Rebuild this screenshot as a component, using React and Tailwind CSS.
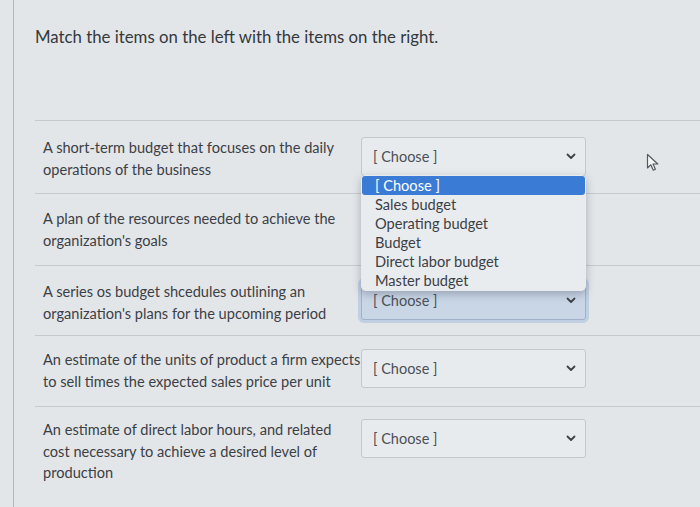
import React from "react";

const rows = [
  { text: ["A short-term budget that focuses on the daily", "operations of the business"], cls: "h-[73px] pt-[16px]" },
  { text: ["A plan of the resources needed to achieve the", "organization's goals"], cls: "h-[72px] pt-[14px]", hidden: true },
  { text: ["A series os budget shcedules outlining an", "organization's plans for the upcoming period"], cls: "h-[70px] pt-[15px]", focused: true },
  { text: ["An estimate of the units of product a firm expects", "to sell times the expected sales price per unit"], cls: "h-[71px] pt-[13px]" },
  { text: ["An estimate of direct labor hours, and related", "cost necessary to achieve a desired level of", "production"], cls: "h-[72px] pt-[12px]", last: true },
];

function Chevron() {
  return (
    <svg width="10" height="7" viewBox="0 0 10 7" className="shrink-0">
      <path d="M1.5 1.5 L5 5 L8.5 1.5" fill="none" stroke="#3d4247" strokeWidth="1.8" strokeLinecap="round" strokeLinejoin="round" />
    </svg>
  );
}

function Select({ focused, hidden }) {
  return (
    <div
      className={
        "w-[225px] h-[39px] shrink-0 rounded-[3px] border flex items-center justify-between pl-[11px] pr-[9px] " +
        (hidden ? "invisible " : "") +
        (focused
          ? "bg-[#c9d6e6] border-[#9fb2c9] shadow-[0_0_0_3px_rgba(150,180,220,0.45)]"
          : "bg-[#e8ebed] border-[#c3c8cc]")
      }
    >
      <span className="text-[14.5px] text-[#4a5056]">[ Choose ]</span>
      <Chevron />
    </div>
  );
}

export default function App() {
  return (
    <div
      className="relative w-[700px] h-[507px] overflow-hidden bg-[#e3e6e8] text-[#3b4046]"
      style={{ fontFamily: "Lato, 'Open Sans', sans-serif" }}
    >
      <div className="ml-[13px] h-full border-l border-[#b3b8bc] flex flex-col">
        <div className="pl-[21px] pt-[25px] h-[120px] text-[16.8px] leading-[24px] text-[#33383d]">
          Match the items on the left with the items on the right.
        </div>
        <div className="ml-[21px] flex flex-col border-t border-[#c6cacd]">
          {rows.map((r, i) => (
            <div
              key={i}
              className={"flex items-start " + r.cls + (r.last ? "" : " border-b border-[#c6cacd]")}
            >
              <div className="w-[326px] pl-[8px] text-[14.6px] leading-[21.5px] text-[#3b4046]">
                {r.text.map((t, j) => (
                  <div key={j} className="whitespace-nowrap">{t}</div>
                ))}
              </div>
              <Select focused={r.focused} hidden={r.hidden} />
            </div>
          ))}
        </div>
      </div>

      {/* open native dropdown list */}
      <div className="absolute left-[361px] top-[175px] w-[225px] rounded-[5px] bg-[#e9ecee] shadow-[0_3px_8px_rgba(60,70,90,0.35)] py-[1px] text-[14.6px] text-[#3b4046] leading-[19px] overflow-hidden">
        <div className="mx-[1px] rounded-[3px] bg-[#3a7bd6] text-white px-[13px] h-[19px]">[ Choose ]</div>
        {["Sales budget", "Operating budget", "Budget", "Direct labor budget", "Master budget"].map((o) => (
          <div key={o} className="px-[14px] h-[19px]">{o}</div>
        ))}
      </div>

      {/* mouse cursor */}
      <svg className="absolute left-[646px] top-[153px]" width="14" height="19" viewBox="0 0 14 19">
        <path d="M1.5 1.5 L1.5 15 L4.8 11.8 L7.3 17.2 L9.4 16.2 L7 11 L11.8 11 Z" fill="#f4f5f6" stroke="#555a60" strokeWidth="1.2" strokeLinejoin="round" />
      </svg>
    </div>
  );
}
